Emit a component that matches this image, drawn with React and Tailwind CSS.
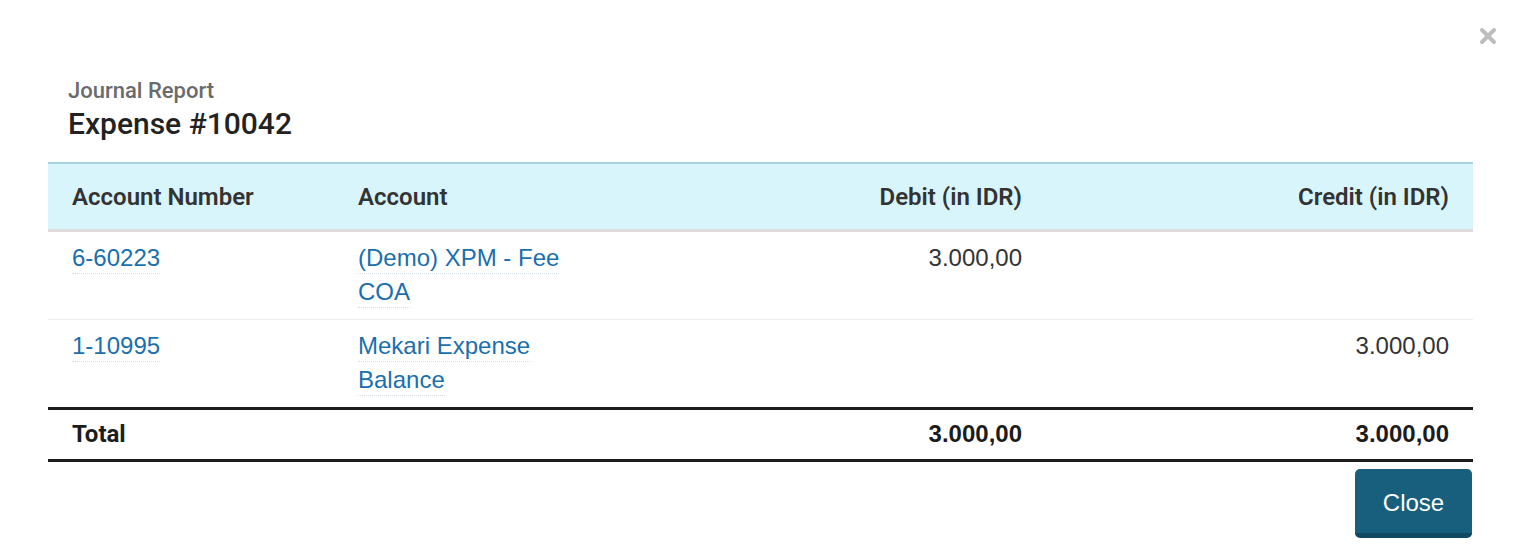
import { X } from 'lucide-react';

const ROWS = [
  { number: '6-60223', account: '(Demo) XPM - Fee COA', debit: '3.000,00', credit: '' },
  { number: '1-10995', account: 'Mekari Expense Balance', debit: '', credit: '3.000,00' },
];

const roboto = "font-['Roboto',sans-serif]";
const helv = "font-['Liberation_Sans',Arial,sans-serif]";

function LinkText({ children }) {
  return (
    <span className="text-[#1a6fae] border-b border-dotted border-[#d6dde2] [box-decoration-break:clone] pb-[2px]">
      {children}
    </span>
  );
}

export default function App() {
  return (
    <div className="relative w-[1516px] h-[551px] bg-white overflow-hidden">
      {/* close x */}
      <button className="absolute right-[16px] top-[24px] text-[#bdbdbd]">
        <X size={24} strokeWidth={4} />
      </button>

      {/* title */}
      <div className={`${roboto} pl-[68px] pt-[77px]`}>
        <p className="text-[22px] leading-[28px] font-medium text-[#6b6b6b]">Journal Report</p>
        <h2 className="text-[30px] leading-[38px] font-medium text-[#222]">Expense #10042</h2>
      </div>

      <div className="pl-[48px] pr-[43px] mt-[19px]">
        <table className="w-full table-fixed border-collapse">
          <colgroup>
            <col className="w-[286px]" />
            <col className="w-[268px]" />
            <col className="w-[444px]" />
            <col />
          </colgroup>
          <thead>
            <tr className={`${roboto} bg-[#d9f5fc] border-t-[2px] border-t-[#a7d3e0] border-b-[3px] border-b-[#dcdcdc] text-[24px] text-[#333]`}>
              <th className="h-[67px] px-[24px] pt-[2px] text-left font-semibold">Account Number</th>
              <th className="px-[24px] pt-[2px] text-left font-semibold">Account</th>
              <th className="px-[24px] pt-[2px] text-right font-semibold">Debit (in IDR)</th>
              <th className="px-[24px] pt-[2px] text-right font-semibold">Credit (in IDR)</th>
            </tr>
          </thead>
          <tbody className={`${helv} text-[24px] leading-[34px] text-[#333]`}>
            {ROWS.map((r, i) => (
              <tr key={r.number} className={i > 0 ? 'border-t border-[#e8eef0]' : ''}>
                <td className="align-top px-[24px] pt-[9px] pb-[10px]">
                  <LinkText>{r.number}</LinkText>
                </td>
                <td className="align-top px-[24px] pt-[9px] pb-[10px]">
                  <LinkText>{r.account}</LinkText>
                </td>
                <td className="align-top px-[24px] pt-[9px] pb-[10px] text-right">{r.debit}</td>
                <td className="align-top px-[24px] pt-[9px] pb-[10px] text-right">{r.credit}</td>
              </tr>
            ))}
            <tr className="border-y-[3px] border-[#1c1c1c] text-[#1c1c1c]">
              <td className={`${roboto} h-[52px] px-[24px] text-[24px] font-bold`}>Total</td>
              <td />
              <td className="px-[24px] text-right font-bold">3.000,00</td>
              <td className="px-[24px] text-right font-bold">3.000,00</td>
            </tr>
          </tbody>
        </table>

        <div className="flex justify-end mt-[7px]">
          <button className={`${helv} w-[117px] h-[69px] rounded-[5px] bg-[#175f7d] border-b-[5px] border-[#104a62] text-white text-[24px] pt-[4px] mr-[1px]`}>
            Close
          </button>
        </div>
      </div>
    </div>
  );
}
